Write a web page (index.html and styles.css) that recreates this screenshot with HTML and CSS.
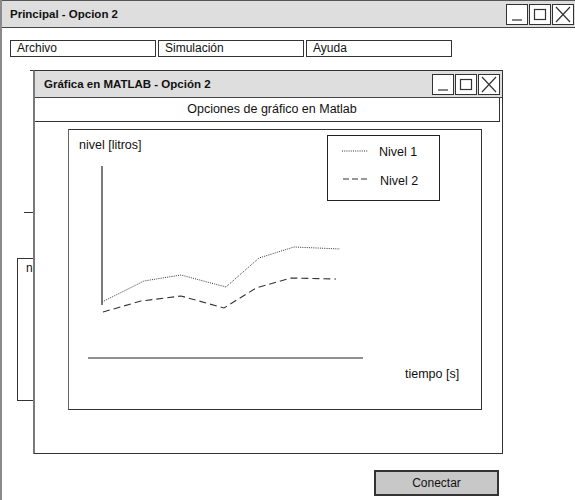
FILE: index.html
```html
<!DOCTYPE html>
<html>
<head>
<meta charset="utf-8">
<link rel="stylesheet" href="styles.css">
</head>
<body>
<div class="win">
  <div class="titlebar">
    <span class="title">Principal - Opcion 2</span>
    <div class="ctrls">
      <span class="ctrl"><svg width="20" height="19" viewBox="0 0 20 19"><path d="M5 15H15" stroke="#333" stroke-width="1.2"/></svg></span>
      <span class="ctrl"><svg width="20" height="19" viewBox="0 0 20 19"><rect x="4.5" y="4.5" width="11" height="10" fill="none" stroke="#333" stroke-width="1.2"/></svg></span>
      <span class="ctrl"><svg width="20" height="19" viewBox="0 0 20 19"><path d="M3 2L17 17M17 2L3 17" stroke="#333" stroke-width="1.2"/></svg></span>
    </div>
  </div>
  <div class="menubar">
    <div class="menu">Archivo</div>
    <div class="menu">Simulación</div>
    <div class="menu">Ayuda</div>
  </div>
  <div class="rule"></div>
  <div class="sep"></div>
  <div class="hidden-box"><span>n</span></div>
  <div class="footer">
    <button class="btn">Conectar</button>
  </div>

  <div class="dialog">
    <div class="dtitlebar">
      <span class="title">Gráfica en MATLAB - Opción 2</span>
      <div class="ctrls">
        <span class="ctrl"><svg width="20" height="19" viewBox="0 0 20 19"><path d="M5 15H15" stroke="#333" stroke-width="1.2"/></svg></span>
        <span class="ctrl"><svg width="20" height="19" viewBox="0 0 20 19"><rect x="4.5" y="4.5" width="11" height="10" fill="none" stroke="#333" stroke-width="1.2"/></svg></span>
        <span class="ctrl"><svg width="20" height="19" viewBox="0 0 20 19"><path d="M3 2L17 17M17 2L3 17" stroke="#333" stroke-width="1.2"/></svg></span>
      </div>
    </div>
    <div class="subbar">Opciones de gráfico en Matlab</div>
    <div class="panel">
      <svg class="chart" width="414" height="281" viewBox="0 0 414 281">
        <text x="11" y="20" class="lbl">nivel [litros]</text>
        <path d="M34 37V176" stroke="#222" stroke-width="1.2" fill="none"/>
        <path d="M20 229H295" stroke="#222" stroke-width="1.2" fill="none"/>
        <text x="337" y="249" class="lbl">tiempo [s]</text>
        <polyline points="34,173 76,152 113,146 158,158 191,129 226,118 272,120" fill="none" stroke="#333" stroke-width="1" stroke-dasharray="1 1.2"/>
        <polyline points="35,183 73,172 113,167 156,179 188,159 223,149 268,150" fill="none" stroke="#333" stroke-width="1.1" stroke-dasharray="7 4"/>
        <rect x="259.5" y="6.5" width="112" height="65" fill="#fff" stroke="#222" stroke-width="1"/>
        <path d="M274 22H300" stroke="#333" stroke-width="1" stroke-dasharray="1 1.2"/>
        <text x="311" y="27" class="lbl">Nivel 1</text>
        <path d="M275 50H301" stroke="#333" stroke-width="1.1" stroke-dasharray="6 3"/>
        <text x="312" y="56" class="lbl">Nivel 2</text>
      </svg>
    </div>
  </div>
</div>
</body>
</html>
```
FILE: styles.css
```css
html, body {
  margin: 0;
  padding: 0;
  background: #fff;
}
body {
  width: 575px;
  height: 500px;
  overflow: hidden;
  font-family: "Liberation Sans", Arial, sans-serif;
  font-size: 12px;
  color: #111;
}
.win {
  position: relative;
  width: 575px;
  height: 500px;
  box-sizing: border-box;
  border-left: 2px solid #8a8a8a;
  display: flex;
  flex-direction: column;
}
.titlebar {
  height: 28px;
  box-sizing: border-box;
  background: #dedede;
  border-top: 1px solid #555;
  border-bottom: 1px solid #444;
  display: flex;
  align-items: center;
  justify-content: space-between;
  padding-left: 8px;
  padding-right: 1px;
}
.title {
  font-weight: bold;
  font-size: 11.5px;
  color: #111;
}
.ctrls {
  display: flex;
  gap: 1px;
}
.ctrl {
  width: 20px;
  height: 19px;
  border: 1px solid #333;
  background: #fff;
  display: block;
}
.ctrl svg {
  display: block;
}
.menubar {
  margin-top: 12px;
  margin-left: 8px;
  display: flex;
  gap: 2px;
}
.menu {
  height: 15px;
  border: 1px solid #333;
  font-size: 12px;
  line-height: 15px;
  padding-left: 6px;
  box-sizing: content-box;
  width: 138px;
}
.rule {
  margin-top: 13px;
  margin-left: 28px;
  width: 425px;
  height: 1px;
  background: #333;
}
.sep {
  margin-top: 141px;
  margin-left: 22px;
  width: 30px;
  height: 1px;
  background: #333;
}
.hidden-box {
  margin-top: 45px;
  margin-left: 15px;
  width: 60px;
  height: 143px;
  border: 1px solid #333;
  padding: 2px 0 0 8px;
  box-sizing: border-box;
  font-size: 12px;
}
.footer {
  margin-top: 69px;
  display: flex;
  justify-content: flex-end;
  padding-right: 76px;
}
.btn {
  width: 125px;
  height: 26px;
  background: #c8c8c8;
  border: 2px solid #333;
  font-family: "Liberation Sans", Arial, sans-serif;
  font-size: 12px;
  color: #111;
  padding: 0;
}
.dialog {
  position: absolute;
  left: 31px;
  top: 70px;
  width: 470px;
  height: 384px;
  box-sizing: border-box;
  background: #fff;
  border: 1px solid #333;
  border-left: 2px solid #7a7a7a;
  display: flex;
  flex-direction: column;
}
.dtitlebar {
  height: 27px;
  box-sizing: border-box;
  background: #dedede;
  border-bottom: 1px solid #444;
  display: flex;
  align-items: center;
  justify-content: space-between;
  padding-left: 9px;
  padding-right: 2px;
}
.subbar {
  height: 24px;
  box-sizing: border-box;
  margin-right: 2px;
  border-right: 1px solid #333;
  border-bottom: 1px solid #333;
  text-align: center;
  line-height: 22px;
  font-size: 12.5px;
  padding-left: 10px;
}
.panel {
  margin-top: 7px;
  margin-left: 33px;
  width: 414px;
  height: 281px;
  box-sizing: border-box;
  border: 1px solid #333;
  border-left-color: #666;
}
.chart {
  display: block;
  margin: -1px;
}
.lbl {
  font-family: "Liberation Sans", Arial, sans-serif;
  font-size: 12.5px;
  fill: #111;
}
```
